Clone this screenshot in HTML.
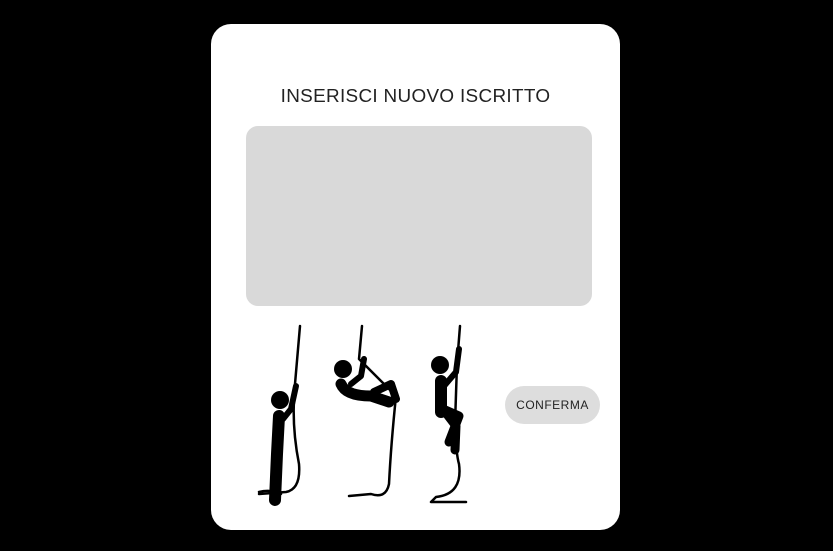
<!DOCTYPE html>
<html><head><style>
html,body{margin:0;padding:0;background:#000;width:833px;height:551px;overflow:hidden}
.card{position:absolute;left:211px;top:24px;width:409px;height:506px;background:#fff;border-radius:20px}
.t{position:absolute;left:0;width:409px;top:62px;text-align:center;font:300 18px "Liberation Sans",sans-serif;color:#222;letter-spacing:0.3px;transform:scaleX(1.05)}
.box{position:absolute;left:35px;top:102px;width:346px;height:180px;background:#d9d9d9;border-radius:12px}
.btn{position:absolute;left:294px;top:362px;width:95px;height:38px;background:#ddd;border-radius:19px;text-align:center;font:12px "Liberation Sans",sans-serif;line-height:38px;color:#222;letter-spacing:0.5px}
svg{position:absolute;left:0;top:0}
</style></head><body>
<div class="card">
<div class="t">INSERISCI NUOVO ISCRITTO</div>
<div class="box"></div>
<div class="btn">CONFERMA</div>
<svg width="409" height="506" fill="none" stroke="#000" stroke-linecap="round" stroke-linejoin="round">
<path d="M89 302 L84 360 Q80 400 88 440 Q90 465 75 468 L48 470" stroke-width="2.5"/>
<path d="M48 468 Q60 465 70 470" stroke-width="2.5"/>
<circle cx="69" cy="376" r="9" fill="#000" stroke="none"/>
<path d="M68 392 L66 430 L64 476" stroke-width="12"/>
<path d="M72 395 L80 385 L85 362" stroke-width="6"/>
<path d="M151 302 L148 335 L185 372 Q180 420 178 460 Q175 475 160 470 L138 472" stroke-width="2.5"/>
<circle cx="132" cy="345" r="9" fill="#000" stroke="none"/>
<path d="M130 360 Q135 372 160 372 L178 378" stroke-width="11"/>
<path d="M140 360 L150 352 L153 335" stroke-width="6"/>
<path d="M163 368 L180 360 L185 375" stroke-width="8"/>
<path d="M249 302 L246 340 L244 400 Q245 430 248 440 Q252 470 225 473 L220 478 L255 478" stroke-width="2.5"/>
<circle cx="229" cy="341" r="9" fill="#000" stroke="none"/>
<path d="M230 357 L230 388" stroke-width="12"/>
<path d="M233 362 L245 348 L248 325" stroke-width="6"/>
<path d="M232 385 L248 392 L238 418" stroke-width="9"/>
<path d="M232 385 L245 402 L244 426" stroke-width="9"/>
</svg>
</div>
</body></html>
